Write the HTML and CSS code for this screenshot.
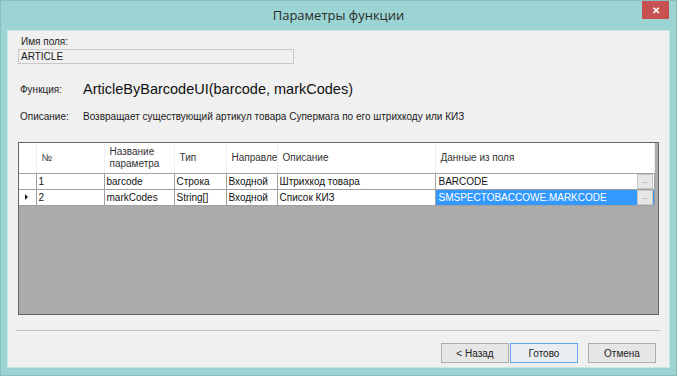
FILE: index.html
```html
<html>

<head>
  <link rel="stylesheet" href="styles.css">
</head>

<body>
  <div class="window">
    <div class="titlebar">
      <span></span>
      <span class="title">Параметры функции</span>
      <span class="close">&#x2715;</span>
    </div>

    <div class="client">
      <div class="field">
        <label class="label">Имя поля:</label>
        <div class="textbox">ARTICLE</div>
      </div>

      <div class="info-row func-row">
        <span class="label info-label">Функция:</span>
        <span class="func-name">ArticleByBarcodeUI(barcode, markCodes)</span>
      </div>

      <div class="info-row desc-row">
        <span class="label info-label">Описание:</span>
        <span class="desc">Возвращает существующий артикул товара Супермага по его штрихкоду или КИЗ</span>
      </div>

      <div class="grid">
        <table class="table">
          <colgroup>
            <col width=17>
            <col width=68>
            <col width=70>
            <col width=52>
            <col width=51>
            <col width=158>
            <col width=219>
          </colgroup>
          <thead>
            <tr>
              <th class="rowhead"></th>
              <th>№</th>
              <th>Название параметра</th>
              <th>Тип</th>
              <th>Направле</th>
              <th>Описание</th>
              <th>Данные из поля</th>
            </tr>
          </thead>
          <tr>
            <td class="rowhead"></td>
            <td>1</td>
            <td>barcode</td>
            <td>Строка</td>
            <td>Входной</td>
            <td>Штрихкод товара</td>
            <td class="data-cell">
              <div class="cell-inner"><span>BARCODE</span><span class="dots">...</span></div>
            </td>
          </tr>
          <tr>
            <td class="rowhead"><span class="arrow"></span></td>
            <td>2</td>
            <td>markCodes</td>
            <td>String[]</td>
            <td>Входной</td>
            <td>Список КИЗ</td>
            <td class="data-cell selected">
              <div class="cell-inner"><span>SMSPECTOBACCOWE.MARKCODE</span><span class="dots">...</span></div>
            </td>
          </tr>
        </table>
      </div>

      <div class="separator"></div>

      <div class="buttons">
        <button class="btn">&lt; Назад</button>
        <button class="btn btn-focus">Готово</button>
        <button class="btn btn-cancel">Отмена</button>
      </div>
    </div>
  </div>
</body>

</html>
```

FILE: styles.css
```css
body {
  margin: 0;
  font-family: "Liberation Sans", Arial, sans-serif;
}

.window {
  width: 677px;
  height: 376px;
  box-sizing: border-box;
  background-color: #9bd4d3;
  border: 1px solid #86c0c0;
  display: flex;
  flex-direction: column;
}

.titlebar {
  height: 29px;
  display: grid;
  grid-template-columns: 1fr auto 1fr;
  align-items: start;
}

.title {
  font-family: "Open Sans", "Noto Sans", sans-serif;
  font-size: 13px;
  color: #2b2b2b;
  padding-top: 5px;
}

.close {
  justify-self: end;
  width: 27px;
  height: 18px;
  margin-right: 7px;
  background-color: #c75050;
  color: #fff;
  font-size: 10px;
  font-weight: bold;
  display: flex;
  align-items: center;
  justify-content: center;
}

.client {
  flex: 1;
  margin: 0 6px 7px 6px;
  background-color: #f0f0f0;
  border: 1px solid #c5e6e5;
  font-size: 10px;
  color: #1a1a1a;
}

.label {
  font-size: 10px;
  color: #222;
}

.field {
  display: flex;
  flex-direction: column;
  padding: 5px 0 0 12px;
}

.field .label {
  padding-left: 1px;
  margin-bottom: 2px;
}

.textbox {
  width: 272px;
  height: 13px;
  margin-left: -2px;
  border: 1px solid #c8c8c8;
  background-color: #f0f0f0;
  padding-left: 2px;
  font-size: 10px;
  line-height: 13px;
}

.info-row {
  display: flex;
  align-items: center;
  padding-left: 12px;
}

.info-label {
  width: 63px;
}

.func-row {
  margin-top: 15px;
  height: 20px;
}

.func-name {
  font-size: 14.5px;
  color: #111;
}

.desc-row {
  margin-top: 12px;
}

.desc {
  font-size: 10px;
}

.grid {
  margin: 20px 0 0 10px;
  width: 639px;
  height: 171px;
  border: 1px solid #646464;
  background-color: #ababab;
}

.table {
  width: 635px;
  table-layout: fixed;
  border-collapse: collapse;
  font-size: 10px;
  background-color: #fff;
}

.table th {
  height: 30px;
  font-weight: normal;
  text-align: left;
  color: #333;
  padding: 0 0 0 5px;
  border-right: 1px solid #f0f0f0;
  border-bottom: 1px solid #a0a0a0;
  line-height: 12px;
  white-space: normal;
  overflow: hidden;
}

.table td {
  height: 15px;
  padding: 0 0 0 2px;
  border: 1px solid #a0a0a0;
  white-space: nowrap;
  overflow: hidden;
  color: #111;
}

.table .rowhead {
  border-left: none;
  padding: 0;
}

.arrow {
  display: block;
  width: 0;
  height: 0;
  margin-left: 6px;
  border-top: 3px solid transparent;
  border-bottom: 3px solid transparent;
  border-left: 3px solid #222;
}

.table .data-cell {
  padding: 0 1px 0 3px;
}

.cell-inner {
  display: flex;
  justify-content: space-between;
  align-items: center;
}

.dots {
  width: 14px;
  height: 13px;
  border: 1px solid #c6c6c6;
  background-color: #e6e6e6;
  color: #7a7a7a;
  font-size: 8px;
  line-height: 11px;
  text-align: center;
}

.selected {
  background-color: #3399ff;
}

.table .selected {
  color: #fff;
}

.separator {
  margin: 15px 9px 0 8px;
  border-top: 1px solid #c3c3c3;
}

.buttons {
  display: flex;
  justify-content: flex-end;
  margin: 12px 13px 0 0;
}

.btn {
  width: 68px;
  height: 20px;
  font-family: "Liberation Sans", Arial, sans-serif;
  font-size: 10px;
  color: #222;
  background-color: #e6e6e6;
  border: 1px solid #adadad;
  padding: 0;
}

.btn-focus {
  border: 1px solid #5fa6ec;
  background-color: #e9eef3;
  margin-left: 1px;
}

.btn-cancel {
  margin-left: 10px;
}
```
